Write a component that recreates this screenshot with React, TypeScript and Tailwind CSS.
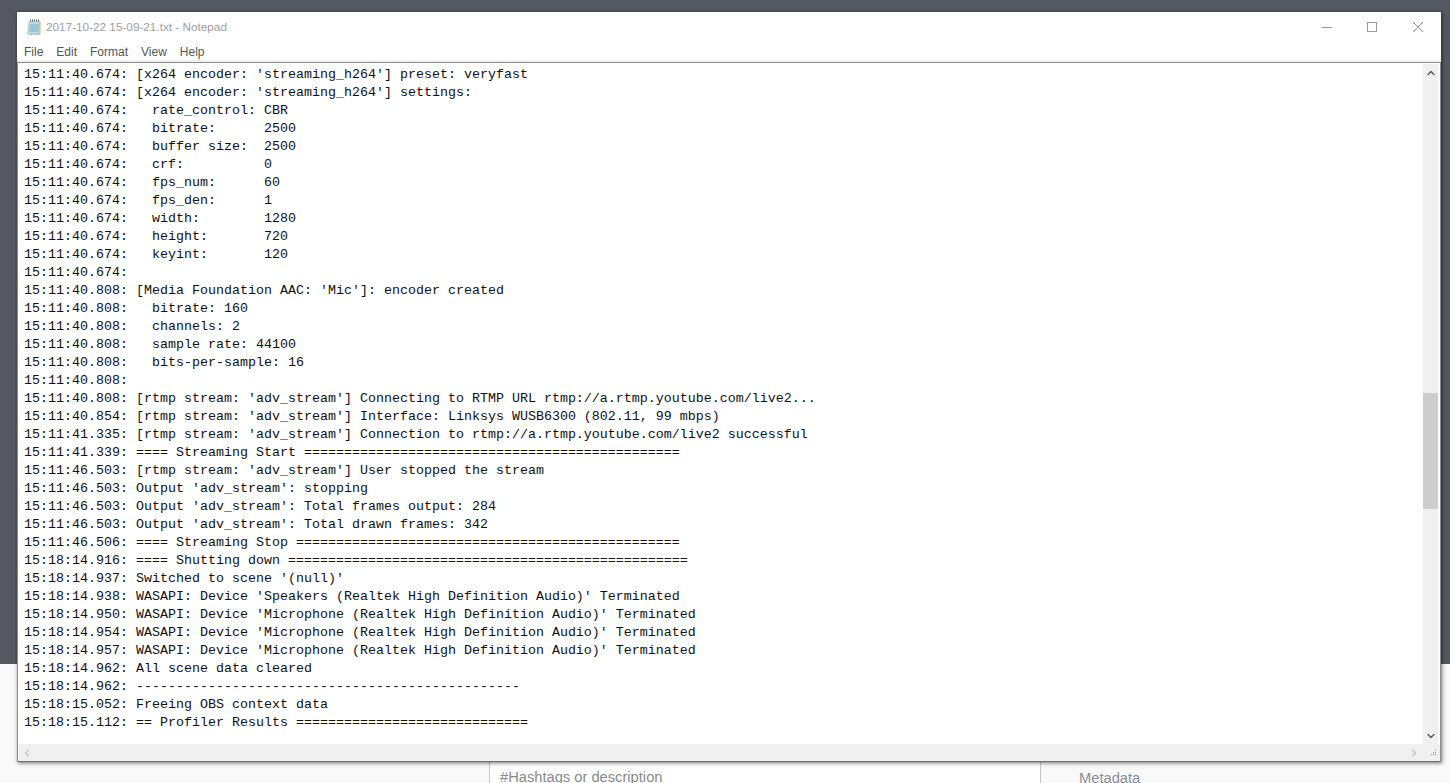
import React from 'react';
import { ChevronUp, ChevronDown, ChevronLeft, ChevronRight } from 'lucide-react';

const LINES = [
  "15:11:40.674: [x264 encoder: 'streaming_h264'] preset: veryfast",
  "15:11:40.674: [x264 encoder: 'streaming_h264'] settings:",
  '15:11:40.674:   rate_control: CBR',
  '15:11:40.674:   bitrate:      2500',
  '15:11:40.674:   buffer size:  2500',
  '15:11:40.674:   crf:          0',
  '15:11:40.674:   fps_num:      60',
  '15:11:40.674:   fps_den:      1',
  '15:11:40.674:   width:        1280',
  '15:11:40.674:   height:       720',
  '15:11:40.674:   keyint:       120',
  '15:11:40.674: ',
  "15:11:40.808: [Media Foundation AAC: 'Mic']: encoder created",
  '15:11:40.808:   bitrate: 160',
  '15:11:40.808:   channels: 2',
  '15:11:40.808:   sample rate: 44100',
  '15:11:40.808:   bits-per-sample: 16',
  '15:11:40.808: ',
  "15:11:40.808: [rtmp stream: 'adv_stream'] Connecting to RTMP URL rtmp://a.rtmp.youtube.com/live2...",
  "15:11:40.854: [rtmp stream: 'adv_stream'] Interface: Linksys WUSB6300 (802.11, 99 mbps)",
  "15:11:41.335: [rtmp stream: 'adv_stream'] Connection to rtmp://a.rtmp.youtube.com/live2 successful",
  '15:11:41.339: ==== Streaming Start ===============================================',
  "15:11:46.503: [rtmp stream: 'adv_stream'] User stopped the stream",
  "15:11:46.503: Output 'adv_stream': stopping",
  "15:11:46.503: Output 'adv_stream': Total frames output: 284",
  "15:11:46.503: Output 'adv_stream': Total drawn frames: 342",
  '15:11:46.506: ==== Streaming Stop ================================================',
  '15:18:14.916: ==== Shutting down ==================================================',
  "15:18:14.937: Switched to scene '(null)'",
  "15:18:14.938: WASAPI: Device 'Speakers (Realtek High Definition Audio)' Terminated",
  "15:18:14.950: WASAPI: Device 'Microphone (Realtek High Definition Audio)' Terminated",
  "15:18:14.954: WASAPI: Device 'Microphone (Realtek High Definition Audio)' Terminated",
  "15:18:14.957: WASAPI: Device 'Microphone (Realtek High Definition Audio)' Terminated",
  '15:18:14.962: All scene data cleared',
  '15:18:14.962: ------------------------------------------------',
  '15:18:15.052: Freeing OBS context data',
  '15:18:15.112: == Profiler Results =============================',
];

const MENU = ['File', 'Edit', 'Format', 'View', 'Help'];

function NotepadIcon() {
  return (
    <svg width="16" height="17" viewBox="0 0 16 17" className="shrink-0">
      <path d="M3 3h12l-.5 13H3z" fill="#d8c9a6" />
      <path d="M3 2.5h10.5L13 15H1.5z" fill="#b5dde8" stroke="#9fbcc6" strokeWidth="0.6" />
      <path d="M4 6h8.5M3.8 8h8.6M3.6 10h8.7M3.4 12h8.8" stroke="#7fb0c0" strokeWidth="1" />
      <path d="M4 1.5h9" stroke="#666" strokeWidth="2" strokeDasharray="1 1" />
    </svg>
  );
}

export default function App() {
  return (
    <div className="relative h-[783px] w-full overflow-hidden font-['Liberation_Sans',sans-serif]">
      <div className="h-[664px] bg-[#555761]" />
      <div className="flex h-[119px] bg-[#f9f9f9]">
        <div className="w-[489px]" />
        <div className="flex w-[552px] items-end border-x border-[#c8c8c8] bg-white pl-[10px] text-[14.7px] leading-[20px] text-[#8a8a8a]">
          <span className="relative top-[4px]">#Hashtags or description</span>
        </div>
        <div className="flex flex-1 items-end pl-[38px] text-[14.7px] leading-[20px] text-[#8a8e96]">
          <span className="relative top-[5px]">Metadata</span>
        </div>
      </div>

      {/* notepad window floats over the page behind it */}
      <div className="absolute left-[17px] top-[12px] flex h-[750px] w-[1424px] flex-col bg-white shadow-[1px_1px_4px_rgba(0,0,0,0.55)]">
        <div className="flex h-[28px] shrink-0 items-center pl-[9px] pt-[2px]">
          <NotepadIcon />
          <span className="ml-[4px] text-[11.75px] text-[#a0a0a0]">2017-10-22 15-09-21.txt - Notepad</span>
          <div className="ml-auto mr-[18px] flex items-center">
            <div className="h-px w-[10px] bg-[#999]" />
            <div className="ml-[35px] h-[10px] w-[10px] border border-[#999]" />
            <svg width="10" height="10" viewBox="0 0 10 10" className="ml-[36px]">
              <path d="M0 0L10 10M10 0L0 10" stroke="#999" strokeWidth="1" />
            </svg>
          </div>
        </div>
        <div className="flex h-[20px] shrink-0 items-center gap-[13px] pl-[7px] pt-[4px] text-[12px] text-[#555]">
          {MENU.map((m) => (
            <span key={m}>{m}</span>
          ))}
        </div>
        <div className="h-[2px] shrink-0 bg-[#f0f0f0]" />
        <div className="flex min-h-0 flex-1 flex-col border-x border-b border-x-[#8a8a8a] border-b-[#6d6d6d] border-t border-t-[#8a8a8a]">
          <div className="flex min-h-0 flex-1 pr-[2px] pt-px">
            <div className="min-w-0 flex-1 pl-[6px] pt-[2px]">
              <pre className="font-['Liberation_Mono',monospace] text-[13.33px] leading-[18px] text-[#111]">
                {LINES.join('\n')}
              </pre>
            </div>
            <div className="flex w-[15px] flex-col items-center bg-[#f0f0f0] text-[#606060]">
              <div className="flex h-[17px] items-center justify-center">
                <ChevronUp size={12} strokeWidth={3} />
              </div>
              <div className="h-[312px]" />
              <div className="h-[116px] w-[15px] bg-[#cdcdcd]" />
              <div className="flex-1" />
              <div className="flex h-[17px] items-center justify-center">
                <ChevronDown size={12} strokeWidth={3} />
              </div>
            </div>
          </div>
          <div className="ml-px flex h-[17px] shrink-0 items-center bg-[#f0f0f0] pl-[2px] pr-[3px] text-[#c4c4c4]">
            <ChevronLeft size={12} strokeWidth={3} />
            <ChevronRight size={12} strokeWidth={3} className="ml-auto mr-[9px]" />
            <svg width="8" height="8" viewBox="0 0 8 8">
              <path d="M6 1h1v1H6zM4 3h1v1H4zM6 3h1v1H6zM2 5h1v1H2zM4 5h1v1H4zM6 5h1v1H6z" fill="#999" />
            </svg>
          </div>
        </div>
      </div>
    </div>
  );
}
